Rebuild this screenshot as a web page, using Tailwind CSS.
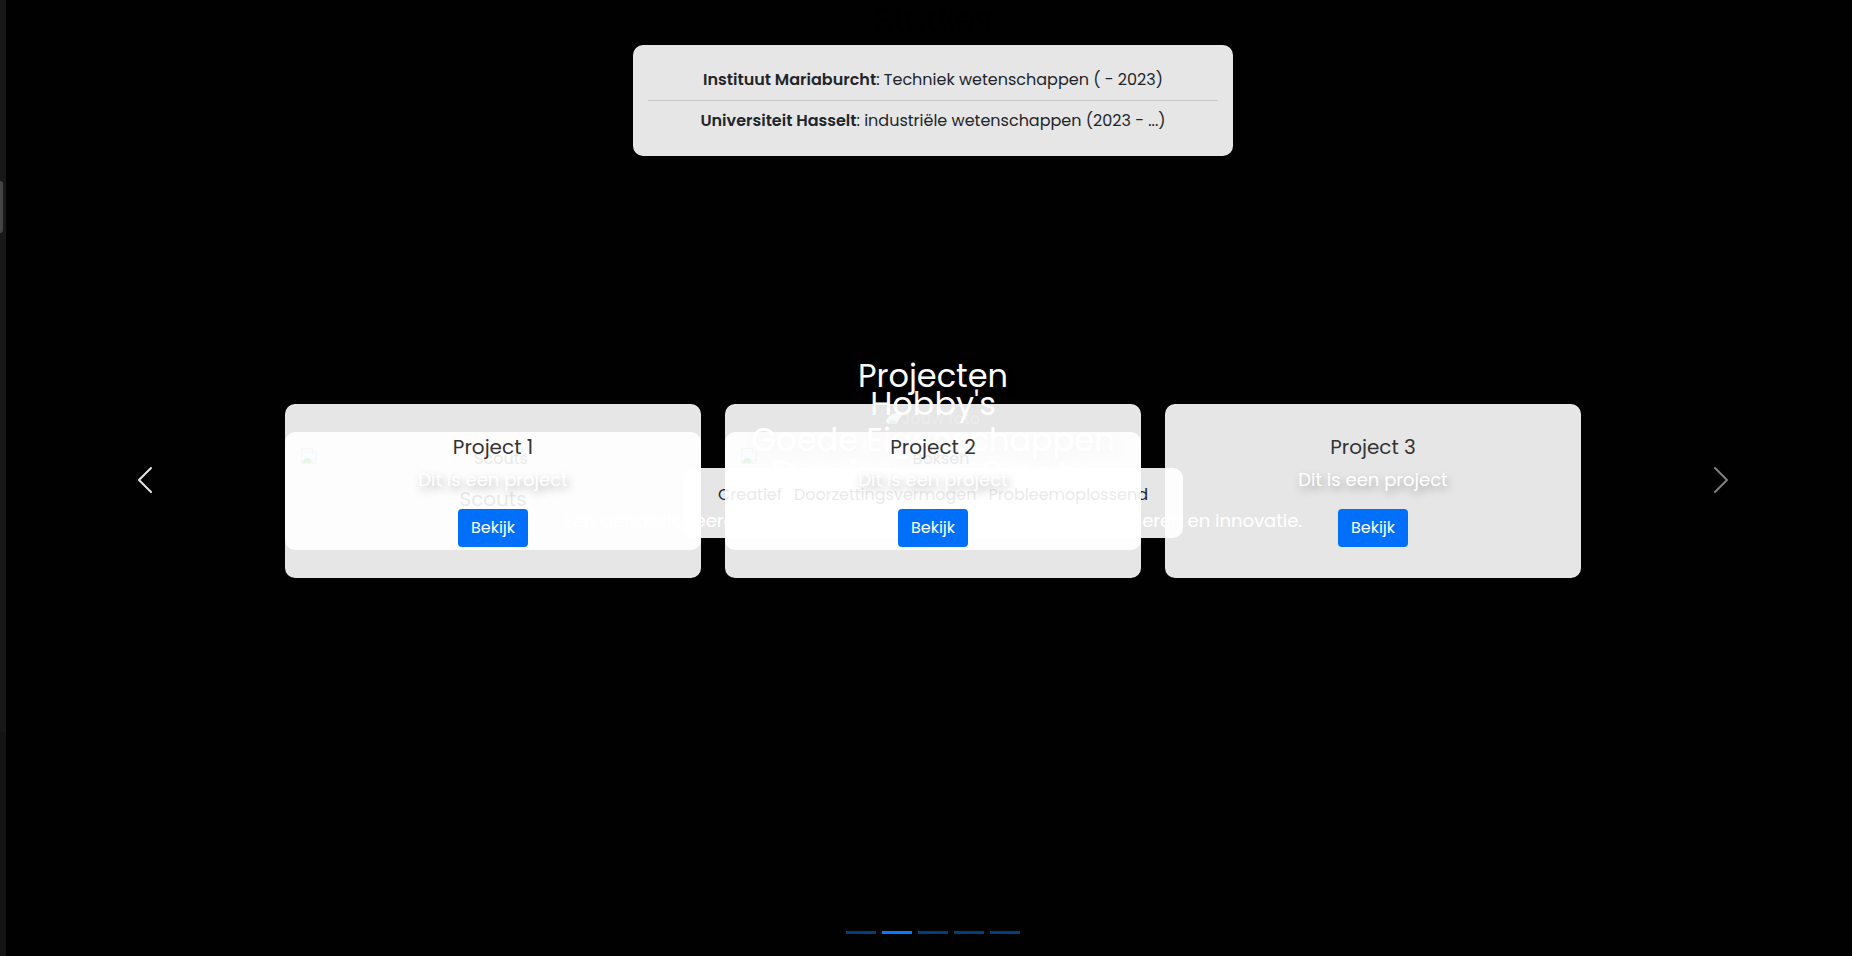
<!DOCTYPE html>
<html lang="nl">
<head>
<meta charset="utf-8">
<title>Portfolio</title>
<script src="https://cdn.jsdelivr.net/npm/@tailwindcss/browser@4"></script>
</head>
<body class="flex min-h-screen overflow-hidden bg-[#010101] text-center font-['Poppins','Inter',sans-serif] text-base text-[#212529]">
  <aside class="flex w-1.5 shrink-0 flex-col bg-[#181818]">
    <div class="mt-[181px] h-[52px] w-[3px] rounded-r-sm bg-[#444444]"></div>
    <div class="mt-auto h-[224px] bg-[#141414]"></div>
  </aside>

  <!-- All slides share one grid cell and are stacked in source order -->
  <main class="grid min-w-0 grow grid-cols-1 grid-rows-1 pl-2">

    <section class="col-start-1 row-start-1 flex flex-col items-center">
      <h2 class="mb-1 text-[32px] leading-10 text-black">Studies</h2>
      <ul class="mt-px flex w-[600px] flex-col rounded-[10px] bg-white/90 px-[15px] pt-[17px] pb-[15px]">
        <li class="border-b border-[#c8c8c8] pt-1.5 pb-2 leading-6"><strong class="font-semibold">Instituut Mariaburcht</strong>: Techniek wetenschappen ( - 2023)</li>
        <li class="pt-2 pb-2 leading-6"><strong class="font-semibold">Universiteit Hasselt</strong>: industriële wetenschappen (2023 - ...)</li>
      </ul>
    </section>

    <section class="col-start-1 row-start-1 flex flex-col items-center pt-[407px]">
      <div class="flex h-6 items-center text-[#444444]">
        <svg class="size-4" viewBox="0 0 16 16"><path d="M0 11C0 6 7 2 14 1l2 3-6 9H3z" fill="#c9daf2"/><path d="M2 13c2-5 7-5 9-1l-1 1z" fill="#35a835"/></svg>
        <span>Jouw foto</span>
      </div>
      <h1 class="mt-5 text-[40px] leading-12 text-white [text-shadow:2px_4px_8px_rgb(0_0_0/0.3)]">Davin van Sante</h1>
      <p class="mt-2 text-lg leading-7 text-white [text-shadow:2px_4px_8px_rgb(0_0_0/0.3)]">Een gepassioneerde student met een voorliefde voor programmeren en innovatie.</p>
    </section>

    <section class="col-start-1 row-start-1 flex flex-col items-center pt-[385px]">
      <h2 class="text-[32px] leading-[38px] text-white [text-shadow:2px_4px_8px_rgb(0_0_0/0.3)]">Hobby's</h2>
      <div class="mt-[9px] grid w-[1296px] grid-cols-3 gap-6">
        <article class="h-[118px] rounded-[10px] bg-white/90 p-4">
          <div class="flex h-[39px] items-start">
            <svg class="size-4" viewBox="0 0 16 16"><path d="M.5.5h11l4 4v6l-5 5H.5z" fill="#d7e5fa" stroke="#aaa"/><path d="M11.500.5v4h4" fill="#fff" stroke="#aaa"/><path d="M1 15c2-6 7-7 10-2l-2 2z" fill="#35a835"/><path d="M15.500 9.500v6h-5z" fill="none" stroke="#aaa"/></svg>
            <span class="grow leading-[22px]">Scouts</span>
          </div>
          <h5 class="text-xl leading-6">Scouts</h5>
        </article>
        <article class="h-[118px] rounded-[10px] bg-white/90 p-4">
          <div class="flex h-[39px] items-start">
            <svg class="size-4" viewBox="0 0 16 16"><path d="M.5.5h11l4 4v6l-5 5H.5z" fill="#d7e5fa" stroke="#aaa"/><path d="M11.500.5v4h4" fill="#fff" stroke="#aaa"/><path d="M1 15c2-6 7-7 10-2l-2 2z" fill="#35a835"/><path d="M15.500 9.500v6h-5z" fill="none" stroke="#aaa"/></svg>
            <span class="grow leading-[22px]">Boksen</span>
          </div>
          <h5 class="text-xl leading-6">Boksen</h5>
        </article>
      </div>
    </section>

    <section class="col-start-1 row-start-1 flex flex-col items-center pt-[421px]">
      <h2 class="text-[32px] leading-[38px] text-white [text-shadow:2px_4px_8px_rgb(0_0_0/0.3)]">Goede Eigenschappen</h2>
      <ul class="mt-[9px] flex h-[70px] w-[500px] items-center justify-center gap-3 rounded-[10px] bg-white/90 pb-4">
        <li>Creatief</li>
        <li>Doorzettingsvermogen</li>
        <li>Probleemoplossend</li>
      </ul>
    </section>

    <section class="col-start-1 row-start-1 flex flex-col items-center pt-[357px]">
      <h2 class="text-[32px] leading-[38px] text-white [text-shadow:2px_4px_8px_rgb(0_0_0/0.3)]">Projecten</h2>
      <div class="mt-[9px] grid w-[1296px] grid-cols-3 gap-6 text-[#333333]">
        <article class="flex flex-col items-center rounded-[10px] bg-white/90 px-8 pt-[31px] pb-[31px]">
          <h5 class="mb-[9px] text-xl leading-6">Project 1</h5>
          <p class="mb-[17px] text-lg leading-6 text-white [text-shadow:2px_4px_8px_rgb(0_0_0/0.3)]">Dit is een project</p>
          <a href="#project-1" class="rounded-sm bg-[#0070fb] px-[13px] py-[7px] leading-6 text-white">Bekijk</a>
        </article>
        <article class="flex flex-col items-center rounded-[10px] bg-white/90 px-8 pt-[31px] pb-[31px]">
          <h5 class="mb-[9px] text-xl leading-6">Project 2</h5>
          <p class="mb-[17px] text-lg leading-6 text-white [text-shadow:2px_4px_8px_rgb(0_0_0/0.3)]">Dit is een project</p>
          <a href="#project-2" class="rounded-sm bg-[#0070fb] px-[13px] py-[7px] leading-6 text-white">Bekijk</a>
        </article>
        <article class="flex flex-col items-center rounded-[10px] bg-white/90 px-8 pt-[31px] pb-[31px]">
          <h5 class="mb-[9px] text-xl leading-6">Project 3</h5>
          <p class="mb-[17px] text-lg leading-6 text-white [text-shadow:2px_4px_8px_rgb(0_0_0/0.3)]">Dit is een project</p>
          <a href="#project-3" class="rounded-sm bg-[#0070fb] px-[13px] py-[7px] leading-6 text-white">Bekijk</a>
        </article>
      </div>
    </section>

    <nav class="pointer-events-none col-start-1 row-start-1 flex items-center justify-between px-[115px] pt-1">
      <button type="button" aria-label="Vorige" class="pointer-events-auto text-white/90"><svg class="size-8" viewBox="0 0 16 16" fill="currentColor"><path d="M11.354 1.646a.5.5 0 0 1 0 .708L5.707 8l5.647 5.646a.5.5 0 0 1-.708.708l-6-6a.5.5 0 0 1 0-.708l6-6a.5.5 0 0 1 .708 0z"/></svg></button>
      <button type="button" aria-label="Volgende" class="pointer-events-auto text-white/50"><svg class="size-8" viewBox="0 0 16 16" fill="currentColor"><path d="M4.646 1.646a.5.5 0 0 1 .708 0l6 6a.5.5 0 0 1 0 .708l-6 6a.5.5 0 0 1-.708-.708L10.293 8 4.646 2.354a.5.5 0 0 1 0-.708z"/></svg></button>
    </nav>

    <div class="col-start-1 row-start-1 mb-[22px] flex gap-1.5 self-end justify-self-center">
      <button type="button" aria-label="Slide 1" class="h-[3px] w-[30px] bg-[#003e80]"></button>
      <button type="button" aria-label="Slide 2" class="h-[3px] w-[30px] bg-[#007bff]"></button>
      <button type="button" aria-label="Slide 3" class="h-[3px] w-[30px] bg-[#003e80]"></button>
      <button type="button" aria-label="Slide 4" class="h-[3px] w-[30px] bg-[#003e80]"></button>
      <button type="button" aria-label="Slide 5" class="h-[3px] w-[30px] bg-[#003e80]"></button>
    </div>
  </main>
</body>
</html>
